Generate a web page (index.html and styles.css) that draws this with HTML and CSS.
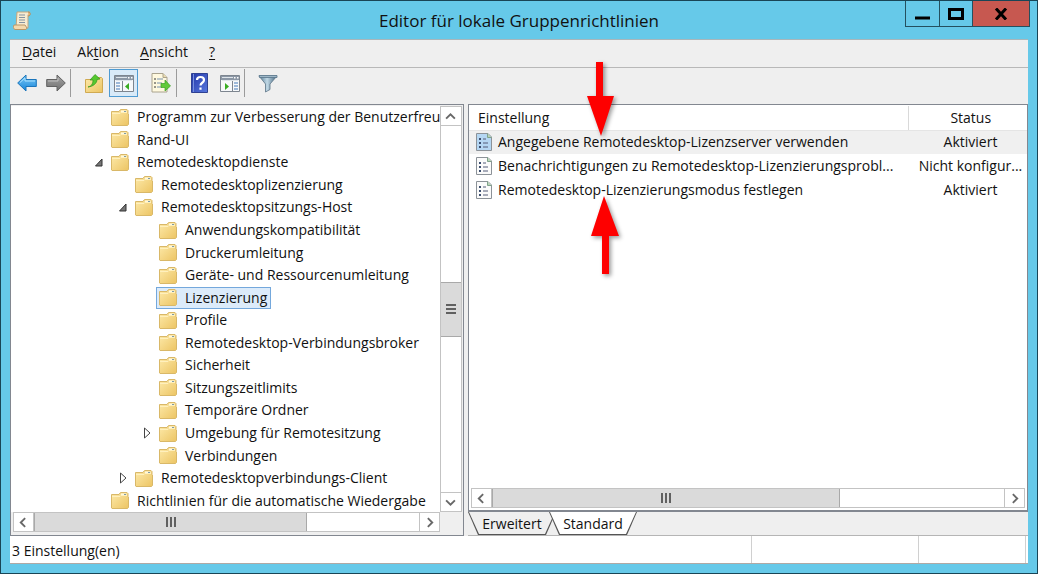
FILE: index.html
```html
<!DOCTYPE html>
<html lang="de">
<head>
	<meta charset="UTF-8">
	<title>Editor für lokale Gruppenrichtlinien</title>
	<link rel="stylesheet" href="styles.css">
</head>
<body>
	<!-- shared icons -->
	<svg class="defs">
		<defs>
			<linearGradient id="gFolder" x1="0" y1="0" x2="1" y2="1"><stop offset="0" stop-color="#fdeaaa"/><stop offset="1" stop-color="#ecc463"/></linearGradient>
			<linearGradient id="gBlue" x1="0" y1="0" x2="0" y2="1"><stop offset="0" stop-color="#7ccbf8"/><stop offset="1" stop-color="#1683d8"/></linearGradient>
			<linearGradient id="gGray" x1="0" y1="0" x2="0" y2="1"><stop offset="0" stop-color="#a5a5a5"/><stop offset="1" stop-color="#6f6f6f"/></linearGradient>
			<linearGradient id="gHelp" x1="0" y1="0" x2="1" y2="1"><stop offset="0" stop-color="#2337a8"/><stop offset="1" stop-color="#5878de"/></linearGradient>
			<linearGradient id="gFunnel" x1="0" y1="0" x2="1" y2="0"><stop offset="0" stop-color="#527791"/><stop offset=".45" stop-color="#c1d9e6"/><stop offset="1" stop-color="#3f6079"/></linearGradient>
			<symbol id="folder" viewBox="0 0 18 17">
				<path d="M.5 2.500h7.500l1-1.500 1-.5h6l1 1v3l.5.5v10.500l-1 1H1l-.5-.5z" fill="url(#gFolder)" stroke="#d9b868"/>
				<path d="M10 1.500h5.500v2H10z" fill="#fff8dc"/>
				<path d="M13 2h2v1h-2z" fill="#7d9ba8"/>
				<path d="M1 4.500h8l1-1h6" fill="none" stroke="#fff0bd"/>
			</symbol>
			<symbol id="setting" viewBox="0 0 16 18">
				<path d="M.5.5h11.500l3.500 3.500v13.500H.5z" fill="var(--paper)" stroke="#8c9298"/>
				<path d="M11.500.5v4h4" fill="#b9d5b8" stroke="#7fa28b"/>
				<path d="M3 5h2v2H3zM3 9h2v2H3zM3 13h2v2H3z" fill="#3d4f70"/>
				<path d="M7 6h3M7 10h5M7 14h5" stroke="#555d78"/>
			</symbol>
			<symbol id="pane" viewBox="0 0 20 17">
				<path d="M.5.5h19v16H.5z" fill="#f6f8fa" stroke="#7d858f"/>
				<path d="M1 1h18v4H1z" fill="#8c97a5"/>
				<path d="M2 2.500h11M2 5.500h16" stroke="#dfe5ea"/>
				<path d="M14 2h1.500v1.500H14zM17 2h1.500v1.500H17z" fill="#fff"/>
			</symbol>
			<symbol id="left" viewBox="0 0 10 10"><path d="M6.500 1l-4 4 4 4" fill="none" stroke="#686868" stroke-width="1.700"/></symbol>
			<symbol id="right" viewBox="0 0 10 10"><path d="M3.500 1l4 4-4 4" fill="none" stroke="#686868" stroke-width="1.700"/></symbol>
			<symbol id="up" viewBox="0 0 10 10"><path d="M1 7l4-4 4 4" fill="none" stroke="#686868" stroke-width="1.700"/></symbol>
			<symbol id="down" viewBox="0 0 10 10"><path d="M1 3l4 4 4-4" fill="none" stroke="#686868" stroke-width="1.700"/></symbol>
			<symbol id="open" viewBox="0 0 8 10"><path d="M7 2v7H.5z" fill="#777" stroke="#333"/></symbol>
			<symbol id="closed" viewBox="0 0 8 12"><path d="M1.500 1v10L7 6z" fill="#fff" stroke="#444"/></symbol>
		</defs>
	</svg>

	<div class="window">
		<header class="titlebar">
			<svg class="app-icon" viewBox="0 0 18 19">
				<path d="M4 1h13l-2 3v13H3z" fill="#f7ecd2" stroke="#c5a57b"/>
				<path d="M15 1c3 0 3 4 0 4" fill="#e5bb83" stroke="#b98d59"/>
				<path d="M1 14h11l2 3-1 1.500H2C0 18 0 15 1 14z" fill="#f4d9ad" stroke="#b99768"/>
				<path d="M6 4h6M6 6.500h6M6 9h6M6 11.500h6" stroke="#8793a0"/>
			</svg>
			<h1>Editor für lokale Gruppenrichtlinien</h1>
			<div class="controls">
				<button class="minimize" aria-label="Minimieren"><svg width="16" height="16"><path d="M0 12h15" stroke="#000" stroke-width="3"/></svg></button>
				<button class="maximize" aria-label="Maximieren"><svg width="16" height="12"><path d="M1.500 1.500h13v9h-13z" fill="none" stroke="#000" stroke-width="3"/></svg></button>
				<button class="close" aria-label="Schließen"><svg width="14" height="12"><path d="M2 0.500l10 11M12 .5L2 11.500" stroke="#000" stroke-width="3"/></svg></button>
			</div>
		</header>

		<nav class="menubar">
			<button><u>D</u>atei</button>
			<button>Ak<u>t</u>ion</button>
			<button><u>A</u>nsicht</button>
			<button><u>?</u></button>
		</nav>

		<div class="toolbar">
			<button aria-label="Zurück"><svg width="20" height="18"><path d="M.7 9L9 1v4.500h10.300v7H9V17z" fill="url(#gBlue)" stroke="#1b75bb"/><path d="M3 8.500L8 4v3h10" fill="none" stroke="#a8e0ff"/></svg></button>
			<button aria-label="Vorwärts"><svg width="20" height="18"><path d="M19.300 9L11 1v4.500H.7v7H11V17z" fill="url(#gGray)" stroke="#626262"/><path d="M2 7h10V4" fill="none" stroke="#c0c0c0"/></svg></button>
			<span class="separator"></span>
			<button class="wide" aria-label="Eine Ebene nach oben"><svg width="18" height="19"><path d="M.5 5.500h8l2-2h6l1 1v14H.5z" fill="url(#gFolder)" stroke="#d0aa52"/><path d="M3 13c4-1 5-4 5-7H5L10 .5 15 5l-3 .5c0 4-4 7-9 7.500z" fill="#55c82f" stroke="#32931b" stroke-width=".7"/></svg></button>
			<button class="pressed" aria-label="Konsolenstruktur anzeigen"><svg width="20" height="17"><use href="#pane"/><path d="M8.500 6v10" stroke="#7d858f"/><path d="M2 8h4M2 11h4M2 14h4" stroke="#4379b8"/><path d="M15 8v7l-4-3.500z" fill="#38ac21"/></svg></button>
			<button class="wide" aria-label="Liste exportieren"><svg width="20" height="20"><path d="M1 .5h11l4 4v14.500H1z" fill="#fff9df" stroke="#aaa38e"/><path d="M12 .5v4h4" fill="#eadbae" stroke="#aaa38e"/><path d="M3 6h2M3 10h2M3 14h2" stroke="#333"/><path d="M6 6h6M6 10h5M6 14h5" stroke="#7791ad"/><path d="M10 10.500h4V7l5.500 6-5.500 5v-3.500h-4z" fill="#61ca38" stroke="#39a023" stroke-width=".7"/></svg></button>
			<span class="separator"></span>
			<button class="wide" aria-label="Hilfe"><svg width="17" height="20"><path d="M.5.5h16v19H.5z" fill="url(#gHelp)" stroke="#2f4193"/><path d="M2.500 1v18" stroke="#7790dc"/><path d="M6 7c0-4 7-4 7 0 0 3-3.500 2.500-3.500 5.500M9.500 14.500v2.300" fill="none" stroke="#fff" stroke-width="2.200"/></svg></button>
			<button aria-label="Aktionsbereich anzeigen"><svg width="20" height="17"><use href="#pane"/><path d="M12.500 6v10" stroke="#7d858f"/><path d="M14 8h4M14 11h4M14 14h4" stroke="#4379b8"/><path d="M5 8v7l4-3.500z" fill="#38ac21"/></svg></button>
			<span class="separator"></span>
			<button class="wide" aria-label="Filter"><svg width="20" height="19"><path d="M1 2l6.500 8v8l4.500-2.500V10L19 2z" fill="url(#gFunnel)" stroke="#5c7486" stroke-width=".8"/><path d="M1 1.500h18v2H1.500z" fill="#9eb7c7" stroke="#58758a" stroke-width=".8"/></svg></button>
		</div>

		<main class="content">
			<section class="tree-pane">
				<ul class="tree">
					<li><i></i><span class="node"><svg><use href="#folder"/></svg>Programm zur Verbesserung der Benutzerfreun</span></li>
					<li><i></i><span class="node"><svg><use href="#folder"/></svg>Rand-UI</span></li>
					<li><i><svg><use href="#open"/></svg></i><span class="node"><svg><use href="#folder"/></svg>Remotedesktopdienste</span></li>
					<li class="level-1"><i></i><span class="node"><svg><use href="#folder"/></svg>Remotedesktoplizenzierung</span></li>
					<li class="level-1"><i><svg><use href="#open"/></svg></i><span class="node"><svg><use href="#folder"/></svg>Remotedesktopsitzungs-Host</span></li>
					<li class="level-2"><i></i><span class="node"><svg><use href="#folder"/></svg>Anwendungskompatibilität</span></li>
					<li class="level-2"><i></i><span class="node"><svg><use href="#folder"/></svg>Druckerumleitung</span></li>
					<li class="level-2"><i></i><span class="node"><svg><use href="#folder"/></svg>Geräte- und Ressourcenumleitung</span></li>
					<li class="level-2"><i></i><span class="node selected"><svg><use href="#folder"/></svg>Lizenzierung</span></li>
					<li class="level-2"><i></i><span class="node"><svg><use href="#folder"/></svg>Profile</span></li>
					<li class="level-2"><i></i><span class="node"><svg><use href="#folder"/></svg>Remotedesktop-Verbindungsbroker</span></li>
					<li class="level-2"><i></i><span class="node"><svg><use href="#folder"/></svg>Sicherheit</span></li>
					<li class="level-2"><i></i><span class="node"><svg><use href="#folder"/></svg>Sitzungszeitlimits</span></li>
					<li class="level-2"><i></i><span class="node"><svg><use href="#folder"/></svg>Temporäre Ordner</span></li>
					<li class="level-2"><i><svg><use href="#closed"/></svg></i><span class="node"><svg><use href="#folder"/></svg>Umgebung für Remotesitzung</span></li>
					<li class="level-2"><i></i><span class="node"><svg><use href="#folder"/></svg>Verbindungen</span></li>
					<li class="level-1"><i><svg><use href="#closed"/></svg></i><span class="node"><svg><use href="#folder"/></svg>Remotedesktopverbindungs-Client</span></li>
					<li><i></i><span class="node"><svg><use href="#folder"/></svg>Richtlinien für die automatische Wiedergabe</span></li>
				</ul>
				<div class="scrollbar vertical">
					<button aria-label="Nach oben"><svg><use href="#up"/></svg></button>
					<div class="track"><div class="thumb"><span class="grip"></span></div></div>
					<button aria-label="Nach unten"><svg><use href="#down"/></svg></button>
				</div>
				<div class="scrollbar horizontal">
					<button aria-label="Nach links"><svg><use href="#left"/></svg></button>
					<div class="track"><div class="thumb"><span class="grip"></span></div></div>
					<button aria-label="Nach rechts"><svg><use href="#right"/></svg></button>
				</div>
			</section>

			<section class="detail">
				<div class="list-pane">
					<table>
						<thead>
							<tr><th class="name">Einstellung</th><th class="status">Status</th></tr>
						</thead>
						<tbody>
							<tr class="active"><td><span class="cell"><svg><use href="#setting"/></svg><span>Angegebene Remotedesktop-Lizenzserver verwenden</span></span></td><td class="status">Aktiviert</td></tr>
							<tr><td><span class="cell"><svg><use href="#setting"/></svg><span>Benachrichtigungen zu Remotedesktop-Lizenzierungsprobl...</span></span></td><td class="status">Nicht konfigur...</td></tr>
							<tr><td><span class="cell"><svg><use href="#setting"/></svg><span>Remotedesktop-Lizenzierungsmodus festlegen</span></span></td><td class="status">Aktiviert</td></tr>
						</tbody>
					</table>
					<div class="scrollbar horizontal">
						<button aria-label="Nach links"><svg><use href="#left"/></svg></button>
						<div class="track"><div class="thumb"><span class="grip"></span></div></div>
						<button aria-label="Nach rechts"><svg><use href="#right"/></svg></button>
					</div>
				</div>
				<div class="tabs">
					<button class="tab">Erweitert</button>
					<button class="tab current">Standard</button>
				</div>
				<!-- red pointer arrows -->
				<svg class="arrow arrow-down" viewBox="0 0 28 75"><path d="M9 0h7v34h11L14 74 0 34h9z" fill="#fe0000"/></svg>
				<svg class="arrow arrow-up" viewBox="0 0 29 79"><path d="M13 0l15 40H18v38h-7V40H0z" fill="#fe0000"/></svg>
			</section>
		</main>

		<footer class="statusbar">
			<span class="message">3 Einstellung(en)</span>
			<span class="part"></span>
			<span class="part short"></span>
		</footer>
	</div>
</body>
</html>
```

FILE: styles.css
```css
* {
	box-sizing: border-box;
}
body {
	margin: 0;
	font-family: "Open Sans", "Noto Sans", sans-serif;
	font-size: 14px;
	line-height: 20px;
	color: #111;
}
button {
	font: inherit;
	color: inherit;
	background: none;
	border: none;
	padding: 0;
	display: flex;
	align-items: center;
	justify-content: center;
}
.defs {
	position: absolute;
	width: 0;
	height: 0;
}
.window {
	display: flex;
	flex-direction: column;
	height: 100vh;
	padding: 0 9px 9px;
	background: #66c9e9;
	border: 1px solid #194556;
}

/* title bar */
.titlebar {
	display: grid;
	grid-template-columns: 1fr auto 1fr;
	align-items: center;
	height: 38px;
	flex: none;
}
.app-icon {
	width: 18px;
	height: 19px;
	margin-left: 3px;
}
.titlebar h1 {
	margin: 0;
	padding-top: 2px;
	font-size: 17px;
	font-weight: normal;
}
.controls {
	display: flex;
	justify-self: end;
	align-self: start;
	margin-right: -2px;
	border: 1px solid #24505f;
	border-top: none;
}
.controls button {
	width: 33px;
	height: 25px;
}
.controls button + button {
	border-left: 1px solid #24505f;
}
.controls .close {
	width: 57px;
	background: #c75850;
}

/* menu and toolbar */
.menubar {
	display: flex;
	flex: none;
	gap: 21px;
	height: 29px;
	padding: 0 12px 3px;
	background: #efefef;
	border-top: 1px solid #a9b6ba;
	border-bottom: 1px solid #b8b8b8;
}
.menubar u {
	text-underline-offset: 2px;
}
.toolbar {
	display: flex;
	flex: none;
	align-items: center;
	height: 36px;
	padding: 0 2px 6px;
	background: #efefef;
}
.toolbar button {
	width: 29px;
	height: 28px;
}
.toolbar .wide {
	width: 38px;
	padding-left: 7px;
}
.toolbar .pressed {
	background: #d9eaf8;
	border: 1px solid #4f9bd2;
}
.separator {
	width: 1px;
	height: 28px;
	background: #9b9b9b;
}

/* panes */
.content {
	display: flex;
	flex: 1;
	gap: 4px;
	min-height: 0;
	background: #efefef;
}
.tree-pane {
	display: grid;
	grid-template: 1fr 22px / 1fr 22px;
	width: 454px;
	flex: none;
	padding: 1px 1px 1px 0;
	background: #efefef;
	border: 1px solid #828790;
}
.tree {
	display: grid;
	grid-auto-rows: 1fr;
	margin: 0;
	padding: 0 0 0 84px;
	list-style: none;
	background: #fff;
	overflow: hidden;
	min-height: 0;
}
.tree li {
	display: flex;
	align-items: center;
	min-height: 0;
	white-space: nowrap;
}
.tree .level-1 {
	padding-left: 24px;
}
.tree .level-2 {
	padding-left: 48px;
}
.tree i {
	display: flex;
	width: 13px;
}
.tree i svg {
	width: 8px;
	height: 12px;
}
.node {
	display: flex;
	align-items: center;
	gap: 8px;
	padding: 0 3px 0 2px;
	border: 1px solid transparent;
}
.node svg {
	width: 18px;
	height: 17px;
}
.node.selected {
	background: #dcebfa;
	border-color: #74a8dc;
}

/* scroll bars */
.scrollbar {
	display: flex;
	background: #fff;
	border: 1px solid #c3c3c3;
}
.scrollbar button {
	flex: none;
	width: 19px;
	height: 18px;
}
.scrollbar button svg {
	width: 11px;
	height: 11px;
}
.scrollbar .track {
	display: flex;
	flex: 1;
}
.scrollbar .thumb {
	display: flex;
	align-items: center;
	justify-content: center;
	background: #dadada;
	border: 0 solid #a9a9a9;
}
.vertical {
	flex-direction: column;
}
.vertical .track {
	flex-direction: column;
	justify-content: center;
	border: 1px solid #c3c3c3;
	border-width: 1px 0;
}
.vertical .thumb {
	height: 55px;
	border-width: 1px 0;
}
.horizontal {
	height: 20px;
}
.horizontal .track {
	border: 1px solid #c3c3c3;
	border-width: 0 1px;
}
.horizontal .thumb {
	width: 71%;
	border-width: 0 1px;
}
.tree-pane .horizontal {
	margin-left: 2px;
}
.list-pane .horizontal {
	margin: 0 2px;
}
.list-pane .thumb {
	width: 68%;
}
.grip {
	width: 10px;
	height: 10px;
	background: repeating-linear-gradient(90deg, #606060 0 2px, transparent 2px 4px);
}
.vertical .grip {
	background: repeating-linear-gradient(#606060 0 2px, transparent 2px 4px);
}

/* settings list */
.detail {
	position: relative;
	display: flex;
	flex-direction: column;
	flex: 1;
	min-width: 0;
}
.list-pane {
	display: flex;
	flex-direction: column;
	justify-content: space-between;
	flex: 1;
	padding: 1px 0 2px;
	background: #fff;
	border: 1px solid #828790;
	border-bottom-width: 2px;
}
table {
	width: 100%;
	table-layout: fixed;
	border-collapse: collapse;
}
th {
	height: 24px;
	padding: 0 0 0 9px;
	font-weight: normal;
	text-align: left;
	border-right: 1px solid #d9d9d9;
	border-bottom: 1px solid #e5e5e5;
}
td {
	height: 24px;
	padding: 0 0 0 7px;
}
.status {
	width: 119px;
	padding: 0 0 0 6px;
	text-align: center;
	white-space: nowrap;
	border-right: none;
}
.cell {
	display: flex;
	align-items: center;
	gap: 6px;
	white-space: nowrap;
}
.cell svg {
	--paper: #fbfbfb;
	flex: none;
	width: 16px;
	height: 18px;
}
.active {
	background: #f0f0f0;
}
.active svg {
	--paper: #b5d7f3;
}

/* tabs below the list */
.tabs {
	display: flex;
	flex: none;
	height: 24px;
	border-bottom: 1px solid #b5b5b5;
}
.tab {
	width: 88px;
	height: 23px;
	background: #555;
	clip-path: polygon(0 0, 100% 0, 78px 100%, 10px 100%);
	position: relative;
	z-index: 0;
}
.tab::before {
	content: "";
	position: absolute;
	inset: 0 0 1px;
	z-index: -1;
	background: #efefef;
	clip-path: polygon(1px 0, 87px 0, 77px 100%, 11px 100%);
}
.tab.current {
	margin-left: -7px;
}
.tab.current::before {
	background: #fff;
}

.arrow {
	position: absolute;
	filter: drop-shadow(2px 2px 2px rgba(0,0,0,0.4));
}
.arrow-down {
	left: 119px;
	top: -42px;
	width: 28px;
	height: 75px;
}
.arrow-up {
	left: 123px;
	top: 92px;
	width: 29px;
	height: 79px;
}

/* status bar */
.statusbar {
	display: flex;
	flex: none;
	height: 28px;
	padding-right: 2px;
	background: #fff;
	border-bottom: 1px solid #b0a9a5;
}
.message {
	flex: 1;
	padding: 5px 2px;
}
.part {
	width: 167px;
	border-left: 1px solid #d0d0d0;
}
.part.short {
	width: 108px;
	border-right: 1px solid #d0d0d0;
}
```
